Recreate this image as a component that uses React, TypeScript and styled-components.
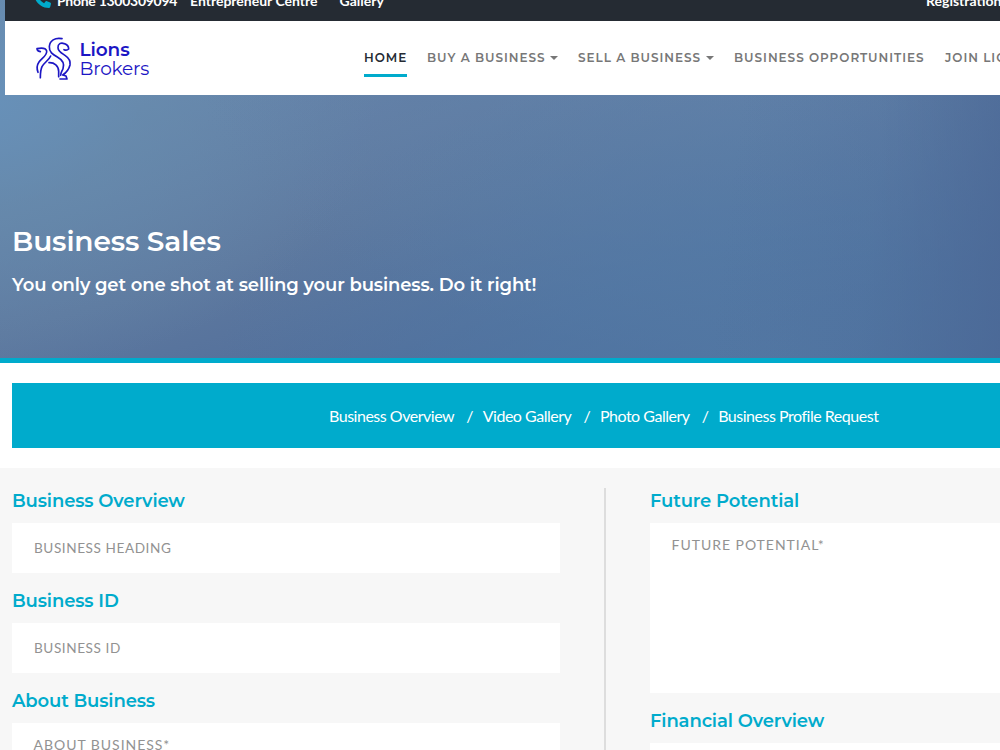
import React from "react";
import styled, { createGlobalStyle } from "styled-components";

const heading = `"Montserrat", "Inter", sans-serif`;
const body = `"Lato", sans-serif`;
const teal = "#00abcc";

const GlobalStyle = createGlobalStyle`
  *, *::before, *::after { box-sizing: border-box; }
  html, body { margin: 0; padding: 0; overflow: hidden; }
  body { font-family: ${body}; background: #fff; }
`;

const Page = styled.div`
  width: 1000px;
  height: 750px;
  overflow: hidden;
`;

const Hero = styled.header`
  height: 363px;
  padding-left: 5px;
  border-bottom: 5px solid ${teal};
  background:
    linear-gradient(97deg, rgba(75, 104, 150, 0) 72%, rgba(75, 104, 150, 0.2) 86%, rgba(75, 104, 150, 0.85) 100%),
    radial-gradient(ellipse 560px 300px at 780px 363px, rgba(84, 122, 165, 0.85), rgba(82, 122, 166, 0.65) 40%, rgba(82, 122, 168, 0) 100%),
    radial-gradient(ellipse 600px 280px at 800px 80px, rgba(97, 130, 170, 0.85), rgba(95, 128, 168, 0.5) 55%, rgba(95, 128, 170, 0) 100%),
    radial-gradient(ellipse 400px 280px at -20px 95px, rgba(103, 147, 188, 0.85) 0%, rgba(103, 142, 175, 0.6) 40%, rgba(103, 138, 170, 0) 100%),
    linear-gradient(163deg, #6885ab 20%, #5e799f 50%, #4a6898 84%);
  background-origin: border-box;
`;

const TopBar = styled.div`
  display: flex;
  height: 21px;
  padding-left: 30px;
  background: #252b33;
  color: #fff;
  font-size: 14px;
  font-weight: 700;
  line-height: 20px;
  white-space: nowrap;
  overflow: hidden;
`;

const TopItem = styled.span<{ $width: number; $track?: number }>`
  flex: none;
  width: ${(p) => p.$width}px;
  margin-top: -9px;
  letter-spacing: ${(p) => p.$track ?? 0}px;
`;

const TopRight = styled.div`
  display: flex;
  margin-left: auto;
`;

const PhoneIcon = styled.svg`
  width: 17px;
  height: 17px;
  margin: -9px 6px 0 -1px;
  flex: none;
`;

const NavBar = styled.div`
  display: flex;
  height: 74px;
  padding-left: 30px;
  background: #fff;
  overflow: hidden;
`;

const Logo = styled.div`
  display: flex;
  width: 329px;
  flex: none;
  padding-top: 14px;
  color: #1c16c4;
`;

const Lion = styled.svg`
  width: 40px;
  height: 47px;
  margin-left: -1px;
`;

const LogoText = styled.div`
  display: flex;
  flex-direction: column;
  padding: 5px 0 0 5.5px;
  font-family: ${heading};
  font-size: 18.5px;
  line-height: 19px;
`;

const LogoBold = styled.span`
  font-weight: 600;
  letter-spacing: -0.1px;
`;

const LogoLight = styled.span`
  font-weight: 400;
  letter-spacing: -0.22px;
`;

const Nav = styled.nav`
  display: flex;
  align-items: flex-start;
  padding-top: 27px;
`;

const NavLink = styled.a<{ $active?: boolean; $width: number }>`
  display: flex;
  flex: none;
  align-items: center;
  width: ${(p) => p.$width}px;
  height: 29px;
  margin-right: 20px;
  padding-bottom: 6px;
  border-bottom: 3px solid ${(p) => (p.$active ? teal : "transparent")};
  color: ${(p) => (p.$active ? "#252b33" : "#777")};
  font-family: ${heading};
  font-size: 12px;
  font-weight: 600;
  letter-spacing: 0.98px;
  line-height: 20px;
  white-space: nowrap;
`;

const Caret = styled.i`
  margin-left: auto;
  border: 4px solid transparent;
  border-top-color: currentColor;
  border-bottom: 0;
`;

const HeroText = styled.div`
  padding: 128px 0 0 7px;
  color: #fff;
  font-family: ${heading};
  font-weight: 600;
`;

const Title = styled.h1`
  margin: 0;
  font-size: 28px;
  font-weight: 600;
  line-height: 36px;
  letter-spacing: -0.14px;
`;

const Tagline = styled.p`
  margin: 14px 0 0;
  font-size: 18px;
  line-height: 24px;
  letter-spacing: -0.13px;
`;

const Crumbs = styled.nav`
  display: flex;
  align-items: center;
  height: 65px;
  margin: 20px 0 20px 12px;
  padding: 0 0 1px 317px;
  background: ${teal};
  color: #fff;
  font-size: 16px;
  letter-spacing: -0.48px;
  white-space: nowrap;
`;

const Crumb = styled.a`
  & + &::before {
    content: "/";
    margin: 0 9.6px 0 12.2px;
  }
`;

const FormArea = styled.main`
  display: flex;
  height: 282px;
  padding: 20px 0 0 12px;
  background: #f7f7f7;
  overflow: hidden;
`;

const Column = styled.section`
  width: 548px;
  flex: none;
`;

const Divider = styled.div`
  width: 2px;
  flex: none;
  margin: 0 44px;
  background: #ddd;
`;

const Label = styled.h4`
  margin: 0;
  height: 35px;
  color: ${teal};
  font-family: ${heading};
  font-size: 18px;
  font-weight: 600;
  line-height: 26px;
  letter-spacing: -0.13px;
`;

const Field = styled.div<{ $area?: boolean }>`
  height: ${(p) => (p.$area ? 170 : 50)}px;
  margin-bottom: 15px;
  padding: ${(p) => (p.$area ? "12px 21.5px" : "15px 22px")};
  background: #fff;
  color: #929292;
  font-size: ${(p) => (p.$area ? 14 : 13.6)}px;
  letter-spacing: ${(p) => (p.$area ? 0.97 : 0.57)}px;
  line-height: 20px;
`;

export default function App() {
  return (
    <Page>
      <GlobalStyle />
      <Hero>
        <TopBar>
          <PhoneIcon viewBox="0 0 512 512" fill={teal}>
            <path d="M164.900 24.600c-7.700-18.600-28-28.500-47.400-23.200l-88 24C12.100 30.200 0 46 0 64c0 247.400 200.600 448 448 448 18 0 33.800-12.100 38.600-29.500l24-88c5.300-19.400-4.600-39.700-23.200-47.400l-96-40c-16.300-6.800-35.200-2.100-46.300 11.600L304.700 368C234.300 334.700 177.300 277.700 144 207.300L193.300 167c13.700-11.200 18.400-30 11.600-46.300z" />
          </PhoneIcon>
          <TopItem $width={133} $track={-0.28}>Phone 1300309094</TopItem>
          <TopItem $width={149.5}>Entrepreneur Centre</TopItem>
          <TopItem $width={60}>Gallery</TopItem>
          <TopRight>
            <TopItem $width={74}>Registration</TopItem>
          </TopRight>
        </TopBar>
        <NavBar>
          <Logo>
            <Lion viewBox="102 105 120 141" fill="none" stroke="currentColor" strokeWidth="5" strokeLinecap="round" strokeLinejoin="round">
              <path d="M186 116C165 112 149 122 148 140C147 156 158 163 172 171C188 180 194 192 189 206C186 214 182 218 182 226" />
              <path d="M174 143C173 132 183 126 193 131C200 133 206 139 206 147C202 151 197 151 192 149M174 143C174 154 184 159 195 166C207 174 212 184 210 195C207 207 199 218 188 225L198 228L201 237H180" />
              <path d="M121 155C116 154 111 150 111 146C121 144 137 143 140 153C142 166 126 174 117 186C110 196 110 206 114 217" />
              <path d="M152 168C147 180 134 186 126 200C121 211 121 222 121 233M147 188C163 187 176 198 176 214V230" />
            </Lion>
            <LogoText>
              <LogoBold>Lions</LogoBold>
              <LogoLight>Brokers</LogoLight>
            </LogoText>
          </Logo>
          <Nav>
            <NavLink $active $width={43}>HOME</NavLink>
            <NavLink $width={131}>BUY A BUSINESS<Caret /></NavLink>
            <NavLink $width={136}>SELL A BUSINESS<Caret /></NavLink>
            <NavLink $width={191}>BUSINESS OPPORTUNITIES</NavLink>
            <NavLink $width={110}>JOIN LIONS</NavLink>
          </Nav>
        </NavBar>
        <HeroText>
          <Title>Business Sales</Title>
          <Tagline>You only get one shot at selling your business. Do it right!</Tagline>
        </HeroText>
      </Hero>
      <Crumbs>
        <Crumb>Business Overview</Crumb>
        <Crumb>Video Gallery</Crumb>
        <Crumb>Photo Gallery</Crumb>
        <Crumb>Business Profile Request</Crumb>
      </Crumbs>
      <FormArea>
        <Column>
          <Label>Business Overview</Label>
          <Field>BUSINESS HEADING</Field>
          <Label>Business ID</Label>
          <Field>BUSINESS ID</Field>
          <Label>About Business</Label>
          <Field $area>ABOUT BUSINESS*</Field>
        </Column>
        <Divider />
        <Column>
          <Label>Future Potential</Label>
          <Field $area>FUTURE POTENTIAL*</Field>
          <Label>Financial Overview</Label>
          <Field $area>FINANCIAL OVERVIEW*</Field>
        </Column>
      </FormArea>
    </Page>
  );
}
